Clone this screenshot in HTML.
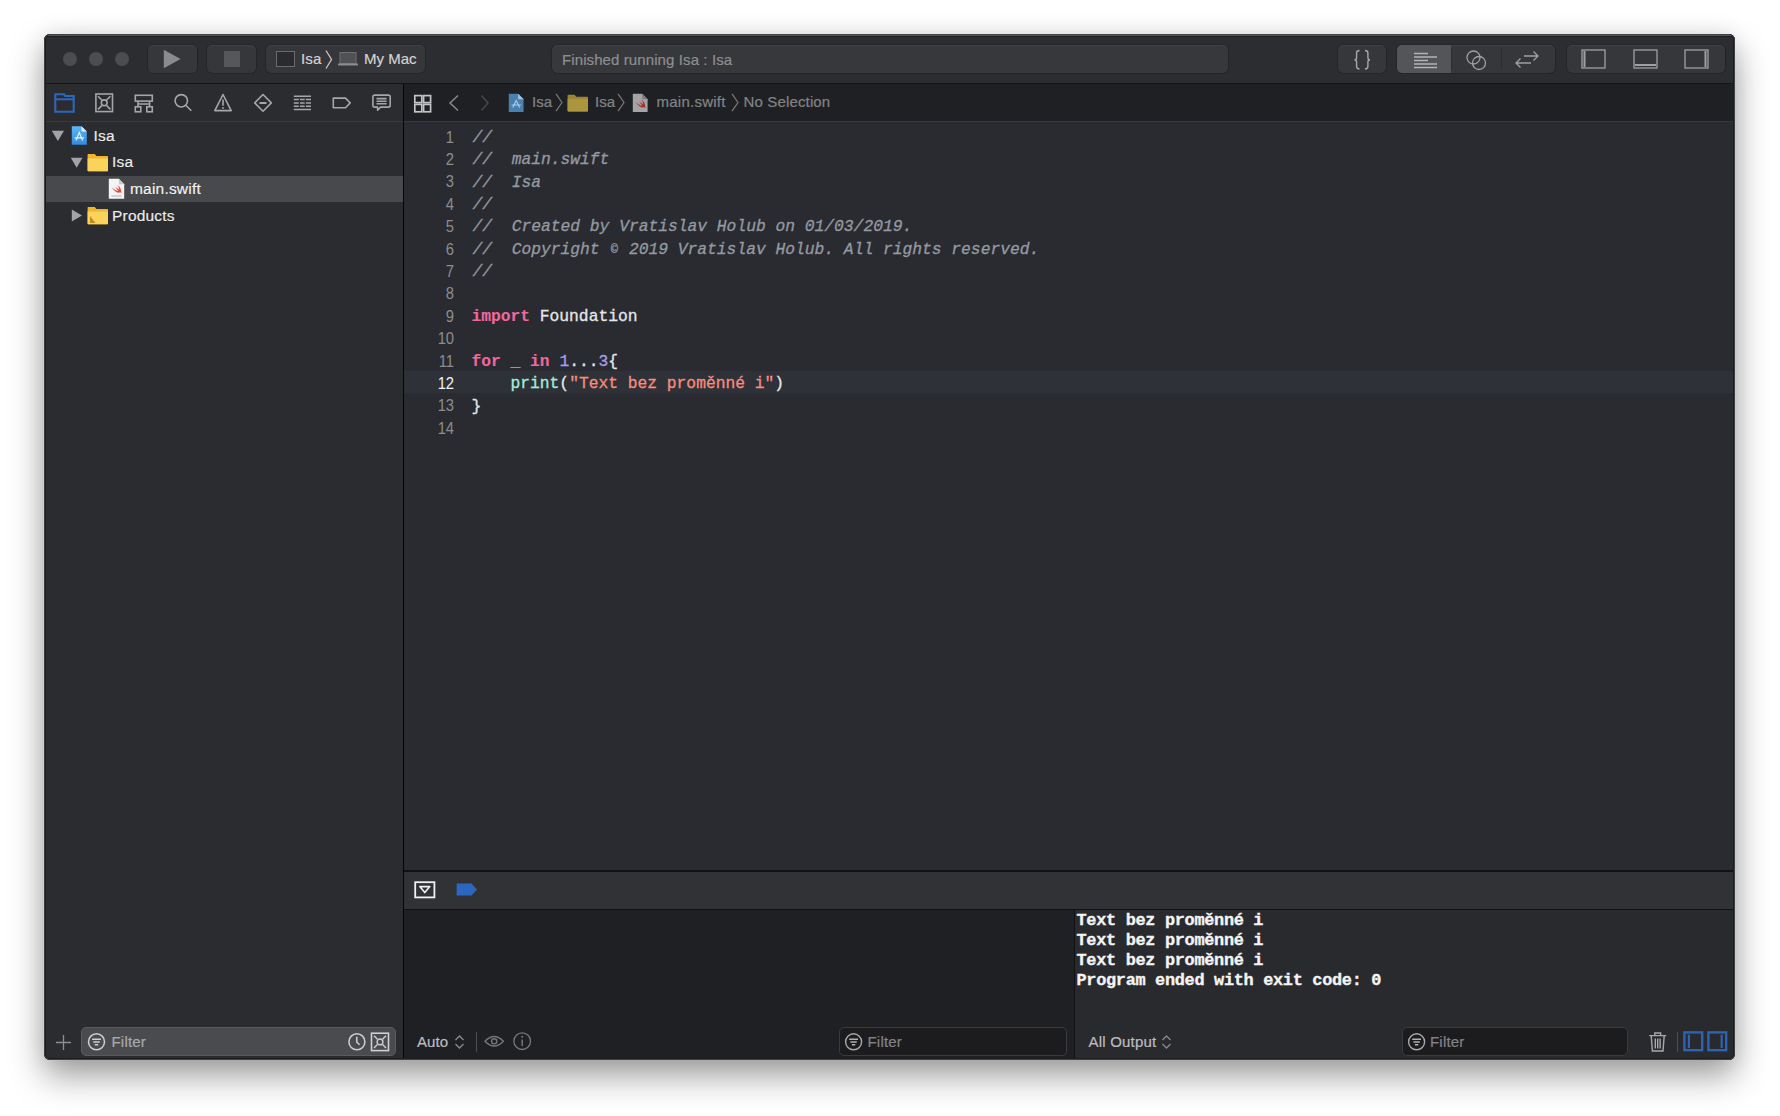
<!DOCTYPE html>
<html><head><meta charset="utf-8">
<style>
html,body{margin:0;padding:0}
body{width:1780px;height:1116px;background:#fff;position:relative;overflow:hidden;font-family:"Liberation Sans",sans-serif}
.a{position:absolute}
#shadow{left:44px;top:34px;width:1691px;height:1026px;border-radius:6px;box-shadow:0 16px 34px rgba(0,0,0,0.38), 0 0 22px rgba(0,0,0,0.08);background:#2a2b2e}
#win{left:0;top:0;width:1780px;height:1116px;clip-path:inset(34px 45px 56px 44px round 6px)}
.ui{font-size:15px;white-space:pre;line-height:18px;-webkit-text-stroke-width:0.2px}
.mono{font-family:"Liberation Mono",monospace;white-space:pre}
svg{position:absolute;overflow:visible}
</style></head><body>
<div id="shadow" class="a"></div>
<div id="win" class="a">
  <!-- toolbar -->
  <div class="a" style="left:44px;top:34px;width:1691px;height:49px;background:#2c2d31"></div>
  <div class="a" style="left:44px;top:83px;width:1691px;height:1px;background:#141416"></div>
  <!-- traffic lights -->
  <div class="a" style="left:63px;top:52px;width:14px;height:14px;border-radius:50%;background:#4c4d51"></div>
  <div class="a" style="left:89px;top:52px;width:14px;height:14px;border-radius:50%;background:#4c4d51"></div>
  <div class="a" style="left:115px;top:52px;width:14px;height:14px;border-radius:50%;background:#4c4d51"></div>
  <!-- play / stop -->
  <div class="a" style="left:148px;top:45px;width:49px;height:28px;border-radius:4.5px;background:#36373b;box-shadow:inset 0 1px 0 rgba(255,255,255,0.05), 0 0 0 0.5px rgba(0,0,0,0.35)"></div>
  <svg style="left:148px;top:45px" width="48" height="28"><path d="M15.8 4.8 L32.6 14 L15.8 23.2 Z" fill="#8a8b8f"/></svg>
  <div class="a" style="left:207px;top:45px;width:49px;height:28px;border-radius:5px;background:#36373b;box-shadow:inset 0 1px 0 rgba(255,255,255,0.05), 0 0 0 0.5px rgba(0,0,0,0.35)"></div>
  <div class="a" style="left:224px;top:51px;width:16px;height:16px;background:#56575b"></div>
  <!-- scheme -->
  <div class="a" style="left:266px;top:45px;width:159px;height:28px;border-radius:5px;background:#36373b;box-shadow:inset 0 1px 0 rgba(255,255,255,0.05), 0 0 0 0.5px rgba(0,0,0,0.35)"></div>
  <div class="a" style="left:276px;top:51px;width:17px;height:14px;border:1px solid #6a6b6f;background:#2a2b2e"></div>
  <div class="a ui" style="left:301px;top:50px;color:#d2d2d4;letter-spacing:0.2px">Isa</div>
  <svg style="left:325px;top:50px" width="8" height="19"><path d="M1 0.5 L6.5 9.5 L1 18.5" fill="none" stroke="#c8c8ca" stroke-width="1.3"/></svg>
  <svg style="left:338px;top:52px" width="20" height="14"><rect x="2" y="0.5" width="16" height="11" fill="#505155" stroke="#6e6f73" stroke-width="1"/><rect x="0" y="11.5" width="20" height="2" fill="#8a8b8f"/></svg>
  <div class="a ui" style="left:364px;top:50px;color:#d2d2d4;letter-spacing:0px">My Mac</div>
  <!-- status field -->
  <div class="a" style="left:552px;top:45px;width:676px;height:28px;border-radius:5px;background:#37383c;box-shadow:inset 0 1px 0 rgba(255,255,255,0.05), 0 0 0 0.5px rgba(0,0,0,0.35)"></div>
  <div class="a ui" style="left:562px;top:50.6px;color:#8e8e91;letter-spacing:0.1px">Finished running Isa : Isa</div>
  <!-- right toolbar -->
  <div class="a" style="left:1338px;top:45px;width:48px;height:28px;border-radius:5px;background:#36373b;box-shadow:inset 0 1px 0 rgba(255,255,255,0.05), 0 0 0 0.5px rgba(0,0,0,0.35)"></div>
  <svg style="left:1353px;top:49px" width="20" height="22"><g fill="none" stroke="#a8a8ab" stroke-width="1.4"><path d="M6.5 1.5 Q3.6 1.5 3.6 4 V8.6 Q3.6 10.8 1.5 10.8 Q3.6 10.8 3.6 13 V17.6 Q3.6 20 6.5 20"/><path d="M12 1.5 Q14.9 1.5 14.9 4 V8.6 Q14.9 10.8 17 10.8 Q14.9 10.8 14.9 13 V17.6 Q14.9 20 12 20"/></g></svg>
  <div class="a" style="left:1397px;top:45px;width:158px;height:28px;border-radius:5px;background:#36373b;box-shadow:inset 0 1px 0 rgba(255,255,255,0.05), 0 0 0 0.5px rgba(0,0,0,0.35)"></div>
  <div class="a" style="left:1397px;top:45px;width:54px;height:28px;border-radius:5px 0 0 5px;background:#545559"></div>
  <div class="a" style="left:1451px;top:48px;width:1px;height:22px;background:#2c2d31"></div>
  <div class="a" style="left:1620px;top:48px;width:1px;height:22px;background:#303135"></div>
  <div class="a" style="left:1671px;top:48px;width:1px;height:22px;background:#303135"></div>
  <div class="a" style="left:1501px;top:48px;width:1px;height:22px;background:#2c2d31"></div>
  <svg style="left:1412px;top:51px" width="26" height="18"><g stroke="#b4b4b7" stroke-width="1.3"><path d="M2 2.5H16M2 6H25M2 9.5H16M2 13H25M2 16.5H25"/></g></svg>
  <svg style="left:1465px;top:49px" width="24" height="22"><g fill="none" stroke="#a0a0a3" stroke-width="1.3"><circle cx="8.5" cy="8.5" r="6.5"/><circle cx="14" cy="14" r="6.5"/></g></svg>
  <svg style="left:1514px;top:49px" width="28" height="20"><g fill="none" stroke="#a0a0a3" stroke-width="1.3"><path d="M10 7H24M19.5 2.5 L24 7 L19.5 11.5"/><path d="M2 14H17M6.5 9.5 L2 14 L6.5 18.5"/></g></svg>
  <div class="a" style="left:1567px;top:45px;width:158px;height:28px;border-radius:5px;background:#36373b;box-shadow:inset 0 1px 0 rgba(255,255,255,0.05), 0 0 0 0.5px rgba(0,0,0,0.35)"></div>
  <svg style="left:1581px;top:49px" width="26" height="20"><g fill="none" stroke="#a0a0a3" stroke-width="1.3"><rect x="1" y="1" width="23" height="18"/></g><rect x="2.5" y="2" width="2" height="16" fill="#a0a0a3"/></svg>
  <svg style="left:1633px;top:49px" width="26" height="20"><g fill="none" stroke="#a0a0a3" stroke-width="1.3"><rect x="1" y="1" width="23" height="18"/></g><rect x="2" y="15" width="21" height="2" fill="#a0a0a3"/></svg>
  <svg style="left:1684px;top:49px" width="26" height="20"><g fill="none" stroke="#a0a0a3" stroke-width="1.3"><rect x="1" y="1" width="23" height="18"/></g><rect x="20.5" y="2" width="2" height="16" fill="#a0a0a3"/></svg>

  <!-- sidebar -->
  <div class="a" style="left:44px;top:84px;width:359px;height:976px;background:#2b2c2f"></div>
  <div class="a" style="left:44px;top:121px;width:359px;height:1px;background:#3a3b3e"></div>
  <div class="a" style="left:403px;top:84px;width:1px;height:976px;background:#050506"></div>
  <svg style="left:54px;top:92px" width="22" height="21"><g fill="none" stroke="#2f67b8" stroke-width="2.1"><path d="M1.3 19.7 V2.2 H10 L11.2 4 H19.7 V19.7 Z"/><path d="M1.3 7.3 H19.7"/></g></svg>
<svg style="left:95px;top:93px" width="19" height="20"><g fill="none" stroke="#a6a6a9" stroke-width="1.6"><rect x="0.9" y="1" width="16.6" height="17.6"/><path d="M3 3.2 L6.8 7 M15.4 3.2 L11.6 7 M3 16.4 L6.8 12.6 M15.4 16.4 L11.6 12.6"/><circle cx="9.2" cy="9.8" r="2.9"/></g></svg>
<svg style="left:134px;top:94px" width="20" height="19"><g fill="none" stroke="#a6a6a9" stroke-width="1.6"><rect x="1.3" y="1.3" width="17" height="5.8"/><rect x="1.3" y="12.8" width="5.5" height="5"/><rect x="12.8" y="12.8" width="5.5" height="5"/><path d="M4 7.1 V12.8 M15.6 7.1 V12.8 M4 10 H15.6"/></g></svg>
<svg style="left:174px;top:93px" width="19" height="20"><g fill="none" stroke="#a6a6a9" stroke-width="1.6"><circle cx="7.3" cy="7.8" r="6.2"/><path d="M11.8 12.3 L17.3 17.8"/></g></svg>
<svg style="left:214px;top:93px" width="19" height="20"><g fill="none" stroke="#a6a6a9" stroke-width="1.6" stroke-linejoin="round"><path d="M9 1.5 L17.2 17.6 H0.8 Z"/><path d="M9 6.5 V12.8"/></g><circle cx="9" cy="15" r="0.9" fill="#a6a6a9"/></svg>
<svg style="left:253px;top:93px" width="20" height="20"><g fill="none" stroke="#a6a6a9" stroke-width="1.6" stroke-linejoin="round"><path d="M10 1.5 L18.3 9.9 L10 18.3 L1.7 9.9 Z"/><path d="M6.5 9.9 H13.5" stroke-width="2"/></g></svg>
<svg style="left:293px;top:95px" width="19" height="17"><g fill="none" stroke="#a6a6a9" stroke-width="1.5"><path d="M0.8 1.3 H18 M0.8 4.6 H18 M0.8 7.9 H18 M0.8 11.2 H18 M0.8 14.5 H18"/></g><g stroke="#2b2c2f" stroke-width="1.2"><path d="M6.4 4 V12 M12.3 4 V12"/></g></svg>
<svg style="left:332px;top:97px" width="20" height="12"><g fill="none" stroke="#a6a6a9" stroke-width="1.6" stroke-linejoin="round"><path d="M1.3 1.1 H13.5 L18.2 5.9 L13.5 10.7 H1.3 Z"/></g></svg>
<svg style="left:372px;top:94px" width="20" height="18"><g fill="none" stroke="#a6a6a9" stroke-width="1.6" stroke-linejoin="round"><path d="M2.6 1.1 H16.4 Q18.2 1.1 18.2 2.9 V11.3 Q18.2 13.1 16.4 13.1 H8.6 L5.6 16.2 V13.1 H2.6 Q0.9 13.1 0.9 11.3 V2.9 Q0.9 1.1 2.6 1.1 Z"/><path d="M4.5 4.6 H14.6 M4.5 7.2 H14.6 M4.5 9.8 H14.6"/></g></svg>
  <!-- tree -->
  <div class="a" style="left:44px;top:176px;width:359px;height:26px;background:#48494c"></div>
  <svg style="left:51px;top:130px" width="14" height="12"><path d="M0.8 0.8 H13 L6.9 11 Z" fill="#a3a3a6"/></svg>
<svg style="left:71px;top:125px" width="17" height="21"><defs><linearGradient id="pg" x1="0" y1="0" x2="0" y2="1"><stop offset="0" stop-color="#5bb8f6"/><stop offset="1" stop-color="#2f8be0"/></linearGradient></defs><path d="M0.8 1.2 H10.5 L15.8 6.5 V19.8 H0.8 Z" fill="url(#pg)"/><path d="M10.5 1.2 V6.5 H15.8 Z" fill="#d7ecfb"/><path d="M5 15.5 L8.3 7.5 L11.6 15.5 M3.6 12.8 H13" stroke="#e6f3fd" stroke-width="1.2" fill="none"/></svg>
<div class="a ui" style="left:93.5px;top:127px;font-size:15.5px;color:#ececee;letter-spacing:0.2px;-webkit-text-stroke:0.15px #ececee">Isa</div>
<svg style="left:70px;top:157px" width="14" height="12"><path d="M0.8 0.8 H12.5 L6.65 10.8 Z" fill="#a3a3a6"/></svg>
<svg style="left:87px;top:153px" width="22" height="19"><path d="M0.6 1.8 Q0.6 1 1.4 1 H7.8 L9.4 3 H20.2 Q21 3 21 3.8 V17.6 Q21 18.2 20.3 18.2 H1.3 Q0.6 18.2 0.6 17.6 Z" fill="#f0b52e"/><path d="M0.6 5.4 H21 V17.6 Q21 18.2 20.3 18.2 H1.3 Q0.6 18.2 0.6 17.6 Z" fill="#fad45a"/></svg>
<div class="a ui" style="left:112px;top:153px;font-size:15.5px;color:#ececee;letter-spacing:0.2px;-webkit-text-stroke:0.15px #ececee">Isa</div>
<svg style="left:108px;top:178px" width="17" height="22"><path d="M0.8 0.8 H10.8 L16.2 6.2 V20.8 H0.8 Z" fill="#f4f4f4"/><path d="M10.8 0.8 V6.2 H16.2 Z" fill="#c9c9c9"/><path d="M3.6 9.2 Q7.5 12.8 10.2 13 Q8.6 10.5 7 8.4 Q10.2 11 11.2 11.6 Q11.2 8.5 9.2 7.2 Q12.6 8.6 13 12.4 Q13.4 14 13.6 15.2 Q12.6 14.1 11.4 14.4 Q8.2 15.8 3.6 9.2 Z" fill="#e8473a"/><rect x="3.5" y="17.2" width="10" height="1.6" fill="#c8c8c8"/></svg>
<div class="a ui" style="left:130px;top:180px;font-size:15.5px;color:#f2f2f4;letter-spacing:0.2px;-webkit-text-stroke:0.15px #f2f2f4">main.swift</div>
<svg style="left:71px;top:209px" width="12" height="13"><path d="M0.8 0.6 L11 6.5 L0.8 12.4 Z" fill="#a3a3a6"/></svg>
<svg style="left:87px;top:206px" width="22" height="19"><path d="M0.6 1.8 Q0.6 1 1.4 1 H7.8 L9.4 3 H20.2 Q21 3 21 3.8 V17.6 Q21 18.2 20.3 18.2 H1.3 Q0.6 18.2 0.6 17.6 Z" fill="#f0b52e"/><path d="M0.6 5.4 H21 V17.6 Q21 18.2 20.3 18.2 H1.3 Q0.6 18.2 0.6 17.6 Z" fill="#fad45a"/><path d="M3 10 L8.5 17 H3 Z" fill="#c08a1e"/></svg>
<div class="a ui" style="left:112px;top:207px;font-size:15.5px;color:#ececee;letter-spacing:0.2px;-webkit-text-stroke:0.15px #ececee">Products</div>
  <!-- sidebar filter -->
  

  <!-- jump bar -->
  <div class="a" style="left:404px;top:84px;width:1331px;height:37px;background:#1f2023"></div>
  <div class="a" style="left:404px;top:121px;width:1331px;height:1px;background:#38393c"></div>
  <svg style="left:413px;top:94px" width="20" height="20"><g fill="none" stroke="#c4c4c6" stroke-width="1.7"><rect x="1.8" y="1.6" width="7" height="7"/><rect x="10.6" y="1.6" width="7" height="7"/><rect x="1.8" y="10.4" width="7" height="7.4"/><rect x="10.6" y="10.4" width="7" height="7.4"/></g></svg>
<svg style="left:448px;top:94px" width="12" height="18"><path d="M10 1.5 L2 9 L10 16.5" fill="none" stroke="#88888b" stroke-width="1.5"/></svg>
<svg style="left:480px;top:94px" width="12" height="18"><path d="M1.5 1.5 L8 9 L1.5 16.5" fill="none" stroke="#47474a" stroke-width="1.5"/></svg>
<svg style="left:508px;top:93px" width="17" height="20"><path d="M0.8 0.8 H10.2 L15.6 6.2 V19 H0.8 Z" fill="#4a7fb0"/><path d="M10.2 0.8 V6.2 H15.6 Z" fill="#a6c4df"/><path d="M4.8 14.5 L8.2 7.5 L11.6 14.5 M3.6 12 H12.8" stroke="#a8cdec" stroke-width="1.1" fill="none"/></svg>
<div class="a ui" style="left:532px;top:93.2px;color:#848487;letter-spacing:0.1px">Isa</div>
<svg style="left:555px;top:93px" width="9" height="19"><path d="M1 0.8 L7 9.5 L1 18.2" fill="none" stroke="#7a7a7d" stroke-width="1.2"/></svg>
<svg style="left:567px;top:94px" width="22" height="18"><path d="M0.6 1.5 Q0.6 0.8 1.4 0.8 H7.6 L9.2 2.8 H20.3 Q21 2.8 21 3.5 V16.8 Q21 17.4 20.3 17.4 H1.3 Q0.6 17.4 0.6 16.8 Z" fill="#9a8634"/><path d="M0.6 5 H21 V16.8 Q21 17.4 20.3 17.4 H1.3 Q0.6 17.4 0.6 16.8 Z" fill="#ab963e"/></svg>
<div class="a ui" style="left:595px;top:93.2px;color:#848487;letter-spacing:0.1px">Isa</div>
<svg style="left:617px;top:93px" width="9" height="19"><path d="M1 0.8 L7 9.5 L1 18.2" fill="none" stroke="#7a7a7d" stroke-width="1.2"/></svg>
<svg style="left:632px;top:93px" width="17" height="20"><path d="M0.8 0.8 H10.2 L15.6 6.2 V19 H0.8 Z" fill="#a4a4a6"/><path d="M10.2 0.8 V6.2 H15.6 Z" fill="#7d7d80"/><path d="M3.6 9 Q7.5 12.6 10.2 12.8 Q8.6 10.3 7 8.2 Q10.2 10.8 11.2 11.4 Q11.2 8.3 9.2 7 Q12.6 8.4 13 12.2 Q13.4 13.8 13.6 15 Q12.6 13.9 11.4 14.2 Q8.2 15.6 3.6 9 Z" fill="#a8302b"/></svg>
<div class="a ui" style="left:656.5px;top:93.2px;color:#848487;letter-spacing:0.25px">main.swift</div>
<svg style="left:731px;top:93px" width="9" height="19"><path d="M1 0.8 L7 9.5 L1 18.2" fill="none" stroke="#7a7a7d" stroke-width="1.2"/></svg>
<div class="a ui" style="left:743.5px;top:93.2px;color:#848487;letter-spacing:0.15px">No Selection</div>

  <!-- editor -->
  <div class="a" style="left:404px;top:122px;width:1331px;height:749px;background:#2a2b30"></div>
  <div class="a" style="left:404px;top:371px;width:1331px;height:22px;background:#2f3139"></div>
  <div class="a" style="left:404px;top:125.6px;width:49.6px;text-align:right;font-size:16.4px;letter-spacing:-0.3px;transform:scaleX(0.9);transform-origin:100% 0;line-height:22.4px;color:#8c8d91;white-space:pre">1
2
3
4
5
6
7
8
9
10
11
<span style="color:#f2f2f2">12</span>
13
14</div>
<div class="a mono" style="left:471.4px;top:126.7px;font-size:16.3px;line-height:22.4px;color:#e6e6e8;-webkit-text-stroke-width:0.3px"><span style="color:#949aa2;font-style:italic;position:relative;left:1.2px">//
//  main.swift
//  Isa
//
//  Created by Vratislav Holub on 01/03/2019.
//  Copyright <span style="display:inline-block;width:9.78px;text-align:center;font-size:12px;vertical-align:1px">©</span> 2019 Vratislav Holub. All rights reserved.
//</span>

<b style="color:#f0689f;-webkit-text-stroke-width:0.1px">import</b> Foundation

<b style="color:#f0689f;-webkit-text-stroke-width:0.1px">for</b> <b style="color:#f0689f;-webkit-text-stroke-width:0.1px">_</b> <b style="color:#f0689f;-webkit-text-stroke-width:0.1px">in</b> <span style="color:#a79df0">1</span>...<span style="color:#a79df0">3</span>{
    <span style="color:#a6ead9">print</span>(<span style="color:#f58d7e">"Text bez proměnné i"</span>)
}
</div>

  <!-- debug bar -->
  <div class="a" style="left:404px;top:870px;width:1331px;height:2px;background:#111113"></div>
  <div class="a" style="left:404px;top:872px;width:1331px;height:37px;background:#313236"></div>
  <div class="a" style="left:404px;top:909px;width:1331px;height:1px;background:#111113"></div>
  <svg style="left:414px;top:881px" width="22" height="18"><rect x="1.2" y="1.2" width="19.2" height="15.2" fill="none" stroke="#f0f0f0" stroke-width="1.8"/><path d="M5.8 5.6 H15.8 L10.8 11.6 Z" fill="none" stroke="#f0f0f0" stroke-width="1.6" stroke-linejoin="round"/></svg>
<svg style="left:456px;top:883px" width="22" height="13"><path d="M0.6 0.4 H15.4 L21 6.4 L15.4 12.4 H0.6 Z" fill="#2b67c1"/></svg>

  <!-- variables / console -->
  <div class="a" style="left:404px;top:910px;width:670px;height:150px;background:#1f2024"></div>
  <div class="a" style="left:1074px;top:910px;width:1px;height:150px;background:#111113"></div>
  <div class="a" style="left:1075px;top:910px;width:660px;height:150px;background:#292a2e"></div>
  <div class="a mono" style="left:1076.5px;top:911.2px;font-size:16.9px;letter-spacing:-0.31px;line-height:19.85px;color:#f4f4f4;font-weight:bold;-webkit-text-stroke-width:0.35px">Text bez proměnné i
Text bez proměnné i
Text bez proměnné i
Program ended with exit code: 0</div>
  <!-- sidebar bottom -->
<svg style="left:55px;top:1034px" width="17" height="17"><path d="M8.5 1 V16 M1 8.5 H16" stroke="#8e8e91" stroke-width="1.3"/></svg>
<div class="a" style="left:81px;top:1027px;width:313px;height:27px;border-radius:5px;background:#4a4b4e;border:1px solid #5a5b5e"></div>
<svg style="left:87px;top:1032px" width="20" height="20"><circle cx="9.5" cy="9.8" r="8" fill="none" stroke="#cfcfd1" stroke-width="1.5"/><path d="M5.1 7.3 H13.9 M6.3 10 H12.7 M7.8 12.7 H11.2" stroke="#cfcfd1" stroke-width="1.5"/></svg>
<div class="a ui" style="left:111.5px;top:1033px;color:#a9a9ac;letter-spacing:0.2px">Filter</div>
<svg style="left:347px;top:1032px" width="20" height="20"><circle cx="9.9" cy="9.8" r="8" fill="none" stroke="#d0d0d2" stroke-width="1.5"/><path d="M9.8 4.8 V10.2 L12.6 12.8" fill="none" stroke="#d0d0d2" stroke-width="1.5"/></svg>
<svg style="left:370px;top:1032px" width="20" height="20"><rect x="1.5" y="1.2" width="17" height="17.4" fill="none" stroke="#d0d0d2" stroke-width="1.6"/><path d="M4 3.8 L7.4 7.2 M16 3.8 L12.6 7.2 M4 16 L7.4 12.6 M16 16 L12.6 12.6" stroke="#d0d0d2" stroke-width="1.4"/><circle cx="10" cy="9.9" r="2.9" fill="none" stroke="#d0d0d2" stroke-width="1.4"/></svg>
<!-- variables bottom -->
<div class="a ui" style="left:417px;top:1033px;color:#bdbdc0;letter-spacing:0.1px">Auto</div>
<svg style="left:454px;top:1034px" width="11" height="16"><path d="M1.5 6 L5.5 2 L9.5 6 M1.5 10 L5.5 14 L9.5 10" fill="none" stroke="#8a8a8d" stroke-width="1.3"/></svg>
<div class="a" style="left:475.5px;top:1032px;width:1px;height:20px;background:#4e4e52"></div>
<svg style="left:484px;top:1033px" width="21" height="17"><path d="M1 8.3 Q10.2 -1.2 19.4 8.3 Q10.2 17.8 1 8.3 Z" fill="none" stroke="#77777a" stroke-width="1.4"/><circle cx="10.2" cy="8.3" r="2.6" fill="none" stroke="#77777a" stroke-width="1.4"/></svg>
<svg style="left:512px;top:1031px" width="21" height="21"><circle cx="10.2" cy="10.2" r="8.3" fill="none" stroke="#77777a" stroke-width="1.3"/><path d="M10.2 8.6 V15" stroke="#77777a" stroke-width="1.5"/><circle cx="10.2" cy="5.8" r="1" fill="#77777a"/></svg>
<div class="a" style="left:839px;top:1027px;width:226px;height:27px;border-radius:5px;background:#1c1c1f;border:1px solid #3a3b3f"></div>
<svg style="left:844px;top:1032px" width="20" height="20"><circle cx="9.6" cy="9.8" r="8" fill="none" stroke="#a9a9ab" stroke-width="1.4"/><path d="M5.2 7.3 H14 M6.4 10 H12.8 M7.9 12.7 H11.3" stroke="#b0b0b2" stroke-width="1.5"/></svg>
<div class="a ui" style="left:867.5px;top:1033px;color:#838386;letter-spacing:0.2px">Filter</div>
<!-- console bottom -->
<div class="a ui" style="left:1088.5px;top:1033px;color:#bdbdc0;letter-spacing:0.2px">All Output</div>
<svg style="left:1161px;top:1034px" width="11" height="16"><path d="M1.5 6 L5.5 2 L9.5 6 M1.5 10 L5.5 14 L9.5 10" fill="none" stroke="#8a8a8d" stroke-width="1.3"/></svg>
<div class="a" style="left:1402px;top:1027px;width:224px;height:27px;border-radius:5px;background:#1c1c1f;border:1px solid #3a3b3f"></div>
<svg style="left:1407px;top:1032px" width="20" height="20"><circle cx="9.6" cy="9.8" r="8" fill="none" stroke="#a9a9ab" stroke-width="1.4"/><path d="M5.2 7.3 H14 M6.4 10 H12.8 M7.9 12.7 H11.3" stroke="#b0b0b2" stroke-width="1.5"/></svg>
<div class="a ui" style="left:1430px;top:1033px;color:#838386;letter-spacing:0.2px">Filter</div>
<svg style="left:1648px;top:1031px" width="20" height="21"><g fill="none" stroke="#a9a9ac" stroke-width="1.4"><path d="M1.2 4.6 H18.2"/><path d="M6.8 4.6 V2 H12.6 V4.6"/><path d="M3.2 4.6 L4.4 20 H15 L16.2 4.6"/><path d="M7.3 7.5 V17.5 M9.7 7.5 V17.5 M12.1 7.5 V17.5"/></g></svg>
<div class="a" style="left:1676.5px;top:1032px;width:1px;height:20px;background:#4e4e52"></div>
<svg style="left:1683px;top:1031px" width="21" height="21"><rect x="1.4" y="1.4" width="17.8" height="17.8" fill="none" stroke="#2c63b5" stroke-width="2.4"/><rect x="4.8" y="3.6" width="2.2" height="13.4" fill="#2c63b5"/></svg>
<svg style="left:1707px;top:1031px" width="21" height="21"><rect x="1.4" y="1.4" width="17.8" height="17.8" fill="none" stroke="#2c63b5" stroke-width="2.4"/><rect x="13.6" y="3.6" width="2.2" height="13.4" fill="#2c63b5"/></svg>
<div class="a" style="left:44px;top:34px;width:1691px;height:1026px;border-radius:6px;box-shadow:inset 0 0 0 1px #404143, inset 0 0 0 2px #1b1c1d"></div>
  <div class="a" style="left:48px;top:35px;width:1683px;height:1px;background:#55575a"></div>
  <div class="a" style="left:47px;top:36px;width:1685px;height:1px;background:#1c1d1f"></div>
</div>
</body></html>
